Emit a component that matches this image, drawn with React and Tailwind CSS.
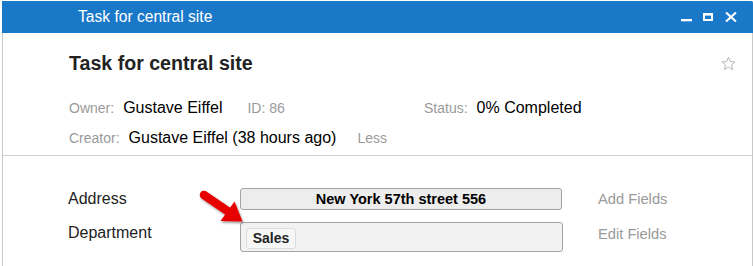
import React from 'react';

const font = { fontFamily: '"Liberation Sans", Arial, sans-serif' };

function TitleIcons() {
  return (
    <div className="flex items-center h-full">
      {/* minimize */}
      <svg width="11" height="10" viewBox="0 0 11 10">
        <rect x="0" y="7" width="11" height="2.3" fill="#fff" />
      </svg>
      {/* maximize */}
      <svg width="10" height="8" className="ml-[11px]" viewBox="0 0 10 8">
        <rect x="1" y="1.2" width="8" height="5.8" fill="none" stroke="#fff" strokeWidth="2" />
        <rect x="0" y="0" width="10" height="2.5" fill="#fff" />
      </svg>
      {/* close */}
      <svg width="12" height="10" className="ml-[12px]" viewBox="0 0 12 10">
        <path d="M1 0.5 L11 9.5 M11 0.5 L1 9.5" stroke="#fff" strokeWidth="2.1" />
      </svg>
    </div>
  );
}

function Star() {
  return (
    <svg width="15" height="15" viewBox="0 0 24 24" fill="none" stroke="#b5b5b5" strokeWidth="1.6" strokeLinejoin="round">
      <polygon points="12,2 15,9 22.5,9.4 16.8,14.3 18.7,21.8 12,17.7 5.3,21.8 7.2,14.3 1.5,9.4 9,9" />
    </svg>
  );
}

function RedArrow() {
  return (
    <svg width="60" height="45" viewBox="0 0 60 45" className="absolute left-[196px] top-[188px] pointer-events-none">
      <defs>
        <filter id="sh" x="-30%" y="-30%" width="160%" height="160%">
          <feDropShadow dx="1" dy="1.5" stdDeviation="1.2" floodColor="#000" floodOpacity="0.45" />
        </filter>
      </defs>
      <g filter="url(#sh)">
        <path d="M8 7 L33 24" stroke="#e60000" strokeWidth="8.5" strokeLinecap="round" />
        <polygon points="46.5,33.5 24.5,33 38.5,13.5" fill="#e60000" />
      </g>
    </svg>
  );
}

export default function App() {
  return (
    <div className="relative w-[753px] h-[266px] bg-white overflow-hidden" style={font}>
      <div className="ml-[2px] mt-[1px] w-[751px] h-[265px] border-l border-r border-[#c8c8c8] flex flex-col">
        {/* title bar */}
        <div className="h-[32px] bg-[#1a78c8] flex items-center justify-between pl-[76px] pr-[16px] -ml-px -mr-px rounded-tr-[2px]">
          <span className="text-white text-[15.6px] leading-none">Task for central site</span>
          <TitleIcons />
        </div>

        {/* header */}
        <div className="border-b border-[#cfcfcf] pb-[2px]">
          <div className="flex items-start justify-between pl-[66px] pr-[16px] pt-[19px]">
            <h1 className="text-[19.6px] leading-[23px] font-bold text-[#222]">Task for central site</h1>
            <div className="mt-[4px]"><Star /></div>
          </div>
          <div className="pl-[66px] mt-[18px]">
            <div className="h-[30px] flex items-center">
              <div className="w-[355px] flex items-baseline">
                <span className="text-[14px] text-[#9a9a9a]">Owner:</span>
                <span className="text-[16px] text-black ml-[9px]">Gustave Eiffel</span>
                <span className="text-[14px] text-[#9a9a9a] ml-[25px]">ID: 86</span>
              </div>
              <div className="flex items-baseline">
                <span className="text-[14px] text-[#9a9a9a]">Status:</span>
                <span className="text-[16px] text-black ml-[9px]">0% Completed</span>
              </div>
            </div>
            <div className="h-[30px] flex items-center">
              <div className="flex items-baseline">
                <span className="text-[14px] text-[#9a9a9a]">Creator:</span>
                <span className="text-[16px] text-black ml-[9px]">Gustave Eiffel (38 hours ago)</span>
                <span className="text-[14px] text-[#9a9a9a] ml-[21px]">Less</span>
              </div>
            </div>
          </div>
        </div>

        {/* fields */}
        <div className="pl-[65px] pt-[32px] flex flex-col gap-[12px]">
          <div className="flex items-center h-[22px]">
            <span className="w-[172px] text-[16px] text-[#222]">Address</span>
            <div className="w-[322px] h-[22px] bg-[#ededed] border border-[#a3a3a3] rounded-[3px] flex items-center justify-center">
              <span className="text-[14.5px] font-bold text-black leading-none">New York 57th street 556</span>
            </div>
            <span className="ml-[36px] text-[14.7px] text-[#9a9a9a]">Add Fields</span>
          </div>
          <div className="flex items-start">
            <span className="w-[172px] text-[16px] leading-[22px] text-[#222]">Department</span>
            <div className="w-[323px] h-[30px] bg-[#f2f2f2] border border-[#a3a3a3] rounded-[3px] pl-[5px] pt-[3px]">
              <div className="inline-flex items-center justify-center w-[50px] h-[21px] bg-[#f6f6f6] border border-[#dcdcdc] rounded-[3px]">
                <span className="text-[14px] font-bold text-[#222] leading-none">Sales</span>
              </div>
            </div>
            <span className="ml-[35px] mt-[1px] text-[14.7px] leading-[22px] text-[#9a9a9a]">Edit Fields</span>
          </div>
        </div>
      </div>
      <RedArrow />
    </div>
  );
}
